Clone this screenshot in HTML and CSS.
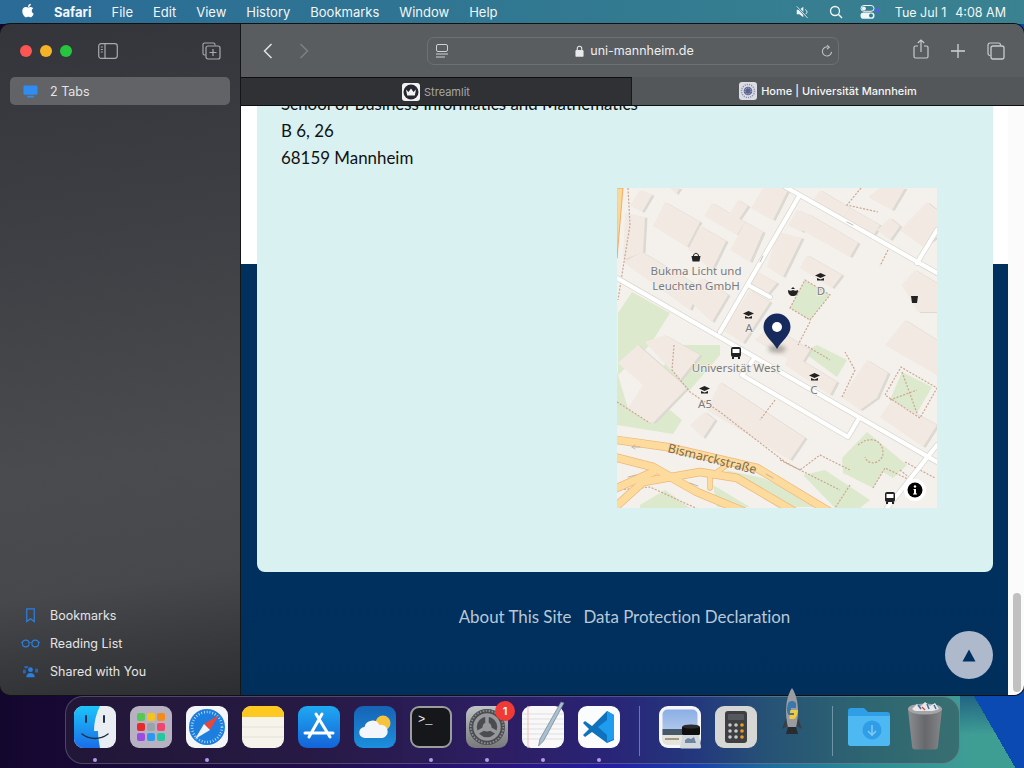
FILE: index.html
```html
<!DOCTYPE html>
<html lang="en">
<head>
    <meta charset="UTF-8">
    <meta name="viewport" content="width=device-width, initial-scale=1.0">
    <title>Home | Universität Mannheim</title>
    <link rel="stylesheet" href="styles.css">
</head>
<body>
<div class="desktop">
    <!-- menu bar -->
    <header class="menubar">
        <svg class="apple" viewBox="0 0 24 24"><path d="M17.05 20.28c-.98.95-2.05.8-3.08.35-1.09-.46-2.09-.48-3.24 0-1.44.62-2.2.44-3.06-.35C2.79 15.25 3.51 7.59 9.05 7.31c1.35.07 2.29.74 3.08.8 1.18-.24 2.31-.93 3.57-.84 1.51.12 2.65.72 3.4 1.8-3.12 1.87-2.38 5.98.48 7.13-.57 1.5-1.31 2.99-2.54 4.09zM12.03 7.25c-.15-2.23 1.66-4.07 3.74-4.25.29 2.58-2.34 4.5-3.74 4.25z"/></svg>
        <nav class="menus">
            <span class="menu-app">Safari</span>
            <span>File</span>
            <span>Edit</span>
            <span>View</span>
            <span>History</span>
            <span>Bookmarks</span>
            <span>Window</span>
            <span>Help</span>
        </nav>
        <div class="status">
            <svg class="status-mute" viewBox="0 0 16 16"><path d="M2 5.500h3L9.500 2v12L5 10.500H2z" fill="#eef3f5"/><path d="M12 5l2 3-2 3" fill="none" stroke="#eef3f5" stroke-width="1"/><path d="M2 1.500 14.500 15" stroke="#2f7a90" stroke-width="2.400"/><path d="M2 1.500 14.500 15" stroke="#eef3f5" stroke-width="1"/></svg>
            <svg class="status-search" viewBox="0 0 14 14"><circle cx="6" cy="6" r="4.500" fill="none" stroke="#f2f5f6" stroke-width="1.300"/><path d="M9.300 9.300 13 13" stroke="#f2f5f6" stroke-width="1.500"/></svg>
            <svg class="status-control" viewBox="0 0 20 14"><rect x="1" y="0.500" width="13" height="5.800" rx="2.900" fill="none" stroke="#f2f5f6"/><circle cx="3.900" cy="3.400" r="2" fill="#f2f5f6"/><rect x="0.500" y="7.500" width="14" height="6.300" rx="3.100" fill="#f2f5f6"/><circle cx="11" cy="10.600" r="2" fill="#2f7a90"/><circle cx="17.500" cy="5.500" r="2" fill="#5a5cf0"/></svg>
            <span class="status-time"><span>Tue Jul 1</span><span>4:08 AM</span></span>
        </div>
    </header>

    <!-- safari window -->
    <main class="window">
        <aside class="sidebar">
            <div class="side-top">
                <div class="lights">
                    <i class="light light-red"></i>
                    <i class="light light-yellow"></i>
                    <i class="light light-green"></i>
                </div>
                <svg class="side-toggle" viewBox="0 0 20 16"><rect x="0.700" y="0.700" width="18.600" height="14.600" rx="2.500" fill="none" stroke="#a9aaac" stroke-width="1.200"/><path d="M7 1v14" stroke="#a9aaac" stroke-width="1.200"/><path d="M2.800 4h2M2.800 6.500h2M2.800 9h2" stroke="#a9aaac"/></svg>
                <svg class="side-newgroup" viewBox="0 0 19 18"><path d="M3.500 13H2.500A1.500 1.500 0 0 1 1 11.500v-9A1.500 1.500 0 0 1 2.500 1h9A1.500 1.500 0 0 1 13 2.500V3.500" fill="none" stroke="#a9aaac" stroke-width="1.100"/><rect x="4" y="4" width="14" height="13" rx="2" fill="none" stroke="#a9aaac" stroke-width="1.200"/><path d="M11 7v7M7.500 10.500h7" stroke="#a9aaac" stroke-width="1.200"/></svg>
            </div>
            <div class="side-tabs">
                <svg class="side-icon" viewBox="0 0 16 14"><rect x="0.500" y="0.500" width="15" height="10" rx="1.500" fill="#2f8cf0"/><path d="M4.500 12.500h7" stroke="#2f8cf0" stroke-width="2"/></svg>
                <span>2 Tabs</span>
            </div>
            <ul class="side-list">
                <li>
                    <svg class="side-icon" viewBox="0 0 16 16"><path d="M4 1h8v13.500l-4-3-4 3z" fill="none" stroke="#2a7fe0" stroke-width="1.300"/></svg>
                    Bookmarks
                </li>
                <li>
                    <svg class="side-icon side-icon-wide" viewBox="0 0 20 10"><circle cx="5" cy="5" r="3.500" fill="none" stroke="#2a7fe0" stroke-width="1.200"/><circle cx="15" cy="5" r="3.500" fill="none" stroke="#2a7fe0" stroke-width="1.200"/><path d="M8.500 4.500c1-.8 2-.8 3 0M1.500 4.500 0 3.500M18.500 4.500l1.500-1" fill="none" stroke="#2a7fe0"/></svg>
                    Reading List
                </li>
                <li>
                    <svg class="side-icon" viewBox="0 0 16 14"><circle cx="8" cy="5" r="2.600" fill="#2a7fe0"/><path d="M3.500 13c0-3 2-4.500 4.500-4.500s4.500 1.500 4.500 4.500z" fill="#2a7fe0"/><path d="M0 5h3v4H0zM1.500 1h4v2.500h-4zM13 4h3v4h-3z" fill="#2368b8"/></svg>
                    Shared with You
                </li>
            </ul>
        </aside>

        <section class="browser">
            <div class="toolbar">
                <svg class="nav-back" viewBox="0 0 10 16"><path d="M8.500 1 1.500 8l7 7" fill="none" stroke="#e2e3e4" stroke-width="1.500"/></svg>
                <svg class="nav-forward" viewBox="0 0 10 16"><path d="M1.500 1l7 7-7 7" fill="none" stroke="#7d8083" stroke-width="1.500"/></svg>
                <div class="address">
                    <svg class="addr-reader" viewBox="0 0 12 14"><rect x="0.500" y="0.500" width="11" height="7" rx="1.500" fill="none" stroke="#d0d1d2"/><path d="M0 10h12M0 13h9" stroke="#d0d1d2"/></svg>
                    <span class="addr-url">
                        <svg class="addr-lock" viewBox="0 0 10 13"><path d="M2.500 6V3.700a2.500 2.500 0 0 1 5 0V6" fill="none" stroke="#e8e9ea" stroke-width="1.200"/><rect x="0.500" y="5.500" width="9" height="7.500" rx="1.300" fill="#e8e9ea"/></svg>
                        uni-mannheim.de
                    </span>
                    <svg class="addr-reload" viewBox="0 0 13 14"><path d="M8.500 2.800A5 5 0 1 0 11.500 8" fill="none" stroke="#c3c4c5" stroke-width="1.100"/><path d="M6.500 0.500 9 2.800 6.500 5" fill="none" stroke="#c3c4c5" stroke-width="1.100"/></svg>
                </div>
                <div class="tool-right">
                    <svg class="tool-share" viewBox="0 0 16 20"><path d="M5 7H2.500A1.500 1.500 0 0 0 1 8.500v9A1.500 1.500 0 0 0 2.500 19h11a1.500 1.500 0 0 0 1.500-1.500v-9A1.500 1.500 0 0 0 13.500 7H11" fill="none" stroke="#c9cacb" stroke-width="1.200"/><path d="M8 13V1M4.800 4 8 1l3.200 3" fill="none" stroke="#c9cacb" stroke-width="1.200"/></svg>
                    <svg class="tool-plus" viewBox="0 0 14 14"><path d="M7 0v14M0 7h14" stroke="#d0d1d2" stroke-width="1.300"/></svg>
                    <svg class="tool-tabs" viewBox="0 0 18 18"><path d="M3.500 13.500H3A2 2 0 0 1 1 11.500V3a2 2 0 0 1 2-2h8.500a2 2 0 0 1 2 2v.500" fill="none" stroke="#c9cacb" stroke-width="1.200"/><rect x="4" y="4" width="13" height="13" rx="2" fill="none" stroke="#c9cacb" stroke-width="1.300"/></svg>
                </div>
            </div>
            <div class="tabbar">
                <div class="tab tab-off">
                    <svg class="favicon" viewBox="0 0 18 18"><rect width="18" height="18" rx="3" fill="#f2f2f2"/><circle cx="9" cy="9" r="7.500" fill="#262730"/><path d="M4 6.500 6.500 9 9 5.500 11.500 9 14 6.500 12.800 12.500H5.200z" fill="#f2f2f2"/></svg>
                    <span>Streamlit</span>
                </div>
                <div class="tab tab-on">
                    <svg class="favicon" viewBox="0 0 18 18"><rect width="18" height="18" rx="3" fill="#dcdde2"/><circle cx="9" cy="9" r="6.500" fill="none" stroke="#8d93b4" stroke-width="1.500" stroke-dasharray="1.200 1"/><circle cx="9" cy="9" r="4.300" fill="#59638f"/><circle cx="9" cy="9" r="3" fill="none" stroke="#c5c8da" stroke-dasharray="1 1"/></svg>
                    <span>Home | Universität Mannheim</span>
                </div>
            </div>

            <div class="viewport">
                <div class="page">
                    <div class="card">
                        <p class="address-text">School of Business Informatics and Mathematics</p>
                        <p class="address-text">B 6, 26</p>
                        <p class="address-text">68159 Mannheim</p>
                        <svg class="map" viewBox="617 188 320 320">
                            <defs>
                                <g id="bld">
                                    <polygon points="665,202 700,222 687,247 653,226"/>
                                    <polygon points="700,226 726,241 712,270 688,250"/>
                                    <polygon points="712,203 745,222 737,235 704,216"/>
                                    <polygon points="738,200 748,206 737,222 728,216"/>
                                    <polygon points="763,188 789,188 773,220 751,208"/>
                                    <polygon points="745,222 763,232 750,262 730,250"/>
                                    <polygon points="670,188 680,188 676,194"/>
                                    <polygon points="640,190 652,195 642,212 630,205"/>
                                    <polygon points="625,213 645,217 643,252 623,260"/>
                                    <polygon points="623,262 642,252 700,287 690,310"/>
                                    <polygon points="684,296 702,278 728,295 712,322"/>
                                    <polygon points="810,215 858,243 850,257 802,230"/>
                                    <polygon points="797,210 810,215 802,232 788,225"/>
                                    <polygon points="778,232 802,238 783,277 767,267"/>
                                    <polygon points="757,272 777,283 767,295 750,283"/>
                                    <polygon points="807,255 842,275 832,288 800,268"/>
                                    <polygon points="723,330 750,290 770,302 743,343"/>
                                    <polygon points="755,340 770,325 810,350 800,366"/>
                                    <polygon points="820,190 850,208 843,218 813,200"/>
                                    <polygon points="850,208 880,225 873,236 843,218"/>
                                    <polygon points="880,188 905,188 892,210 868,197"/>
                                    <polygon points="900,230 927,202 937,210 937,237 923,247"/>
                                    <polygon points="877,230 890,218 900,226 890,240"/>
                                    <polygon points="902,285 915,270 937,283 937,312 918,312"/>
                                    <polygon points="618,363 638,345 687,388 653,423 628,408 643,385"/>
                                    <polygon points="645,342 665,335 700,355 680,380"/>
                                    <polygon points="720,382 805,438 790,460 707,410"/>
                                    <polygon points="690,425 705,412 715,420 703,438"/>
                                    <polygon points="790,353 837,382 830,395 785,365"/>
                                    <polygon points="842,397 867,360 888,373 877,398 860,410"/>
                                    <polygon points="880,417 892,400 937,425 923,447"/>
                                    <polygon points="885,345 905,320 937,340 937,375"/>
                                </g>
                            </defs>
                            <rect x="617" y="188" width="320" height="320" fill="#f4f1ec"/>

                            <!-- green areas -->
                            <g fill="#dde9cd">
                                <polygon points="618,313 632,292 670,313 650,345 618,375"/>
                                <polygon points="660,372 677,345 720,345 720,355 690,390"/>
                                <polygon points="790,308 805,280 830,295 810,320"/>
                                <polygon points="803,352 817,345 847,360 837,377"/>
                                <polygon points="890,400 902,372 932,387 917,413"/>
                                <polygon points="842,458 867,432 907,465 893,478 883,472 873,488 843,473"/>
                                <polygon points="803,475 825,470 870,500 860,508 835,508"/>
                                <polygon points="725,470 763,478 823,507 777,507"/>
                                <polygon points="713,485 750,507 717,507"/>
                                <polygon points="617,372 628,408 650,423 670,410 682,420 673,434 617,425"/>
                                <polygon points="640,505 665,490 690,508 640,508"/>
                            </g>

                            <use href="#bld" transform="translate(2.500 1)" fill="#dcd9d3"/>
                            <use href="#bld" fill="#f1e9e2"/>

                            <!-- footpaths -->
                            <g fill="none" stroke="#cba691" stroke-width="1.200" stroke-dasharray="2 1.500">
                                <path d="M628 188 630 225 624 262 618 300"/>
                                <path d="M790 308 805 280 830 295 810 320z"/>
                                <path d="M861 188 847 205 878 212M888 250 880 266"/>
                                <path d="M805 345 830 360M810 322 798 345"/>
                                <path d="M885 395 901 367 937 388 920 418z"/>
                                <path d="M674 345 672 370 690 392 720 412 785 462 800 470 820 455 850 470"/>
                                <path d="M780 460 800 470 840 490M850 485 835 508"/>
                                <path d="M842 397 855 370 845 352"/>
                                <path d="M858 445c12-10 25-5 25 8 0 10-15 14-18 4"/>
                                <path d="M617 490 650 487 700 510"/>
                                <path d="M617 402 650 423"/>
                                <path d="M775 400 760 420 M873 488 885 468 910 480"/>
                                <path d="M900 470 925 490M905 462 935 478"/>
                                <path d="M890 400 917 390M902 372 917 413"/>
                            </g>

                            <!-- streets -->
                            <g fill="none" stroke-linecap="round" stroke-linejoin="round">
                                <g stroke="#d8d5cf" stroke-width="5.500">
                                    <path d="M617 278 937 462M775 181 937 273M798 198 720 332M748 285 770 297"/>
                                    <path d="M753 360 742 375 848 437 858 420M917 263 937 230M937 445 887 508"/>
                                </g>
                                <g stroke="#fff" stroke-width="4.200">
                                    <path d="M617 278 937 462M775 181 937 273M798 198 720 332M748 285 770 297"/>
                                    <path d="M753 360 742 375 848 437 858 420M917 263 937 230M937 445 887 508"/>
                                </g>
                                <path d="M617 188h6l-6 70z" fill="#fcd896" stroke="#ee9f58" stroke-width="0.800"/>
                                <g stroke="#efb679" stroke-width="8.600">
                                    <path d="M610 439 667 447 757 468 830 512"/>
                                    <path d="M610 456 653 467 697 492 745 512"/>
                                    <path d="M610 512 643 482 700 472 737 478 795 512"/>
                                    <path d="M610 491 653 472"/>
                                    <path d="M710 488 710 477 727 465" stroke-width="5.500"/>
                                </g>
                                <g stroke="#fddb9d" stroke-width="7.200">
                                    <path d="M610 439 667 447 757 468 830 512"/>
                                    <path d="M610 456 653 467 697 492 745 512"/>
                                    <path d="M610 512 643 482 700 472 737 478 795 512"/>
                                    <path d="M610 491 653 472"/>
                                    <path d="M710 488 710 477 727 465" stroke-width="4"/>
                                </g>
                                <g stroke="#b3aaa0" stroke-width="0.800">
                                    <path d="M853 225l-6-3M640 447h-6M632 447l3-2M632 447l3 2"/>
                                    <path d="M773 478l-7-4M690 483l8 3M628 477l8-2"/>
                                    <path d="M760 262l3-6"/>
                                </g>
                            </g>

                            <!-- labels -->
                            <g class="map-label">
                                <text x="696" y="275">Bukma Licht und</text>
                                <text x="696" y="290">Leuchten GmbH</text>
                                <text x="736" y="372">Universität West</text>
                                <text x="705" y="408">A5</text>
                                <text x="749" y="332">A</text>
                                <text x="821" y="295">D</text>
                                <text x="814" y="394">C</text>
                            </g>
                            <text class="map-street" transform="translate(667 452) rotate(14)">Bismarckstraße</text>

                            <!-- pois -->
                            <g fill="#222">
                                <path d="M691.500 256h9l-1 5.500h-7z"/>
                                <path d="M693.500 256c0-3.500 5-3.500 5 0" fill="none" stroke="#222"/>
                                <path d="M815 275.500l5.500-2.500 5.500 2.500-5.500 2.500zM817 278l3.500 1.500 3.500-1.500v2.500h-7z"/>
                                <path d="M743 313.500l5.500-2.500 5.500 2.500-5.500 2.500zM745 316l3.500 1.500 3.500-1.500v2.500h-7z"/>
                                <path d="M809 375.500l5.500-2.500 5.500 2.500-5.500 2.500zM811 378l3.500 1.500 3.500-1.500v2.500h-7z"/>
                                <path d="M699 388.500l5.500-2.500 5.500 2.500-5.500 2.500zM701 391l3.500 1.500 3.500-1.500v2.500h-7z"/>
                                <path d="M788 290c2 1 3 1 5 0 2 1 3 1 5 0 0 4-2 6-5 6s-5-2-5-6zM793 287l2 2h-4z"/>
                                <path d="M911 296h7l-1 7h-5z"/>
                            </g>
                            <g>
                                <rect x="731" y="347" width="10" height="10" rx="2" fill="#222"/>
                                <rect x="732.500" y="349" width="7" height="4" fill="#fff"/>
                                <path d="M732 357h2v2h-2zM738 357h2v2h-2z" fill="#222"/>
                                <rect x="885" y="492" width="10" height="10" rx="2" fill="#222"/>
                                <rect x="886.500" y="494" width="7" height="4" fill="#fff"/>
                                <path d="M886 502h2v2h-2zM892 502h2v2h-2z" fill="#222"/>
                            </g>

                            <!-- marker -->
                            <ellipse class="map-shadow" cx="777" cy="349" rx="9" ry="4"/>
                            <path d="M777 349c-4-8-13.500-13-13.500-22a13.500 13.500 0 0 1 27 0c0 9-9.500 14-13.500 22z" fill="#172a5e"/>
                            <circle cx="777" cy="327" r="5" fill="#fff"/>

                            <!-- info button -->
                            <circle cx="915" cy="490" r="11" fill="#fff"/>
                            <circle cx="915" cy="490" r="7.500" fill="#000"/>
                            <circle cx="915" cy="486.500" r="1.200" fill="#fff"/>
                            <path d="M913.500 489h2.500v4.500h1v1h-4v-1h1v-3.500h-.5z" fill="#fff"/>
                        </svg>
                    </div>
                    <footer class="page-footer">
                        <a>About This Site</a>
                        <a>Data Protection Declaration</a>
                    </footer>
                    <div class="to-top"><svg viewBox="0 0 14 13"><path d="M7 0.500 13.500 12.500H0.500z" fill="#00305e"/></svg></div>
                </div>
                <div class="scrollbar"><div class="scroll-thumb"></div></div>
            </div>
        </section>
    </main>

    <!-- dock -->
    <div class="dock">
        <div class="dock-app">
            <svg viewBox="0 0 42 42"><defs><linearGradient id="fnd" x1="0" y1="0" x2="0" y2="1"><stop offset="0" stop-color="#1cc4fa"/><stop offset="1" stop-color="#1a6ee8"/></linearGradient></defs><rect width="42" height="42" rx="9" fill="#e9eef3"/><path d="M9 0h17c-4 8-6 16-6 25h4c0 6 1 11 2 17H9a9 9 0 0 1-9-9V9a9 9 0 0 1 9-9z" fill="url(#fnd)"/><path d="M12 10v6M30 10v6" stroke="#1f2f45" stroke-width="2" stroke-linecap="round"/><path d="M8 28c8 6 18 6 26 0" fill="none" stroke="#1f2f45" stroke-width="1.500" stroke-linecap="round"/></svg>
            <i class="dock-dot"></i>
        </div>
        <div class="dock-app">
            <svg viewBox="0 0 42 42"><rect width="42" height="42" rx="9" fill="#b8b1c2"/><rect x="7" y="7" width="8" height="8" rx="2" fill="#54c957"/><rect x="17" y="7" width="8" height="8" rx="2" fill="#f5c21e"/><rect x="27" y="7" width="8" height="8" rx="2" fill="#f28c1e"/><rect x="7" y="17" width="8" height="8" rx="2" fill="#e8292c"/><rect x="17" y="17" width="8" height="8" rx="2" fill="#9aa3a8"/><rect x="27" y="17" width="8" height="8" rx="2" fill="#f0456e"/><rect x="7" y="27" width="8" height="8" rx="2" fill="#9a4de0"/><rect x="17" y="27" width="8" height="8" rx="2" fill="#2a9af0"/><rect x="27" y="27" width="8" height="8" rx="2" fill="#20c9a0"/></svg>
        </div>
        <div class="dock-app">
            <svg viewBox="0 0 42 42"><rect width="42" height="42" rx="9" fill="#f4f5f6"/><circle cx="21" cy="21" r="18" fill="#1c7fe0"/><circle cx="21" cy="21" r="15" fill="none" stroke="#cfe6fb" stroke-width="2.500" stroke-dasharray="0.800 2"/><polygon points="33,9 18,18 24,24" fill="#e8453c"/><polygon points="9,33 18,18 24,24" fill="#f1f2f3"/></svg>
            <i class="dock-dot"></i>
        </div>
        <div class="dock-app">
            <svg viewBox="0 0 42 42"><rect width="42" height="42" rx="9" fill="#f5f3ea"/><path d="M0 9a9 9 0 0 1 9-9h24a9 9 0 0 1 9 9v2H0z" fill="#fdc921"/><path d="M0 21h42M0 31h42" stroke="#e4e2d8"/></svg>
        </div>
        <div class="dock-app">
            <svg viewBox="0 0 42 42"><defs><linearGradient id="aps" x1="0" y1="0" x2="0" y2="1"><stop offset="0" stop-color="#1ea9f2"/><stop offset="1" stop-color="#1463d8"/></linearGradient></defs><rect width="42" height="42" rx="9" fill="url(#aps)"/><path d="M24 8 11 31M18 8l14 23M7 27h28" stroke="#fff" stroke-width="3" stroke-linecap="round"/></svg>
        </div>
        <div class="dock-app">
            <svg viewBox="0 0 42 42"><defs><linearGradient id="wth" x1="0" y1="0" x2="0" y2="1"><stop offset="0" stop-color="#1663b5"/><stop offset="1" stop-color="#1c8fdc"/></linearGradient></defs><rect width="42" height="42" rx="9" fill="url(#wth)"/><circle cx="29" cy="17" r="7.500" fill="#f6c33c"/><path d="M11 32a5.500 5.500 0 0 1-.5-11 8 8 0 0 1 15-2 6.500 6.500 0 0 1 3 13z" fill="#f3f7fb"/></svg>
        </div>
        <div class="dock-app">
            <div class="term-icon"><span>&gt;_</span></div>
            <i class="dock-dot"></i>
        </div>
        <div class="dock-app">
            <svg viewBox="0 0 42 42"><defs><linearGradient id="stg" x1="0" y1="0" x2="0" y2="1"><stop offset="0" stop-color="#c0c4c6"/><stop offset="1" stop-color="#77797b"/></linearGradient></defs><rect width="42" height="42" rx="9" fill="url(#stg)"/><circle cx="21" cy="21" r="18" fill="#4a4c4f"/><circle cx="21" cy="21" r="16.300" fill="none" stroke="#8c8e91" stroke-width="1.800" stroke-dasharray="1.500 1.500"/><circle cx="21" cy="21" r="12" fill="none" stroke="#96989b" stroke-width="3.500"/><circle cx="21" cy="21" r="4.500" fill="#96989b"/><path d="M21 21V9M21 21 10.500 27M21 21l10.500 6" stroke="#96989b" stroke-width="3.500"/></svg>
            <span class="dock-badge">1</span>
            <i class="dock-dot"></i>
        </div>
        <div class="dock-app">
            <svg viewBox="0 0 42 42"><rect y="0" width="42" height="42" rx="9" fill="#f8f8f8"/><path d="M0 8h42M0 13h42M0 18h42M0 23h42M0 28h42M0 33h42" stroke="#dfdfe2" stroke-width="1"/><path d="M6 0v42" stroke="#f3b9b9"/><path d="M39-4 18 33l-1.500 7 5-5L42-3z" fill="#a9c0d2" stroke="#6e7f8c" stroke-width="0.700"/></svg>
            <i class="dock-dot"></i>
        </div>
        <div class="dock-app">
            <svg viewBox="0 0 42 42"><rect width="42" height="42" rx="9" fill="#fbfcfd"/><path d="M29 5 14 20 7 15 5 17l6 6-6 6 2 2 7-5 15 11 7-3V9z" fill="#0e72bd"/><path d="M29 5l7 4v24l-7 3zM29 14 20 21l9 8z" fill="#1f9cf0" fill-rule="evenodd"/></svg>
            <i class="dock-dot"></i>
        </div>
        <i class="dock-sep"></i>
        <div class="dock-app">
            <svg viewBox="0 0 42 42"><defs><linearGradient id="sky" x1="0" y1="0" x2="0" y2="1"><stop offset="0" stop-color="#8aaee6"/><stop offset="1" stop-color="#c9d8ec"/></linearGradient></defs><rect width="42" height="42" rx="9" fill="#f4f6f8"/><rect x="3.500" y="3.500" width="35" height="35" rx="5" fill="url(#sky)"/><path d="M3.500 23h20v6H3.500z" fill="#46586a"/><path d="M3.500 29h20v9.500H8a4.500 4.500 0 0 1-4.500-4.500z" fill="#e6e4da"/><path d="M6 33h14" stroke="#8a7f6c" stroke-width="1.500"/><path d="M24 28h16l2 13a1.500 1.500 0 0 1-1.500 1.500H22.500A1.500 1.500 0 0 1 21 41z" fill="#d3d8dd"/><rect x="23" y="20" width="18" height="9" rx="1.500" fill="#0f0f10"/><ellipse cx="32" cy="20.500" rx="8.500" ry="2" fill="#2c2c2e"/><path d="M26 34l3-2 3 1 3-2 2 6H26z" fill="#6f86a0"/></svg>
        </div>
        <div class="dock-app">
            <svg viewBox="0 0 42 42"><rect width="42" height="42" rx="9" fill="#d6d6d4"/><rect x="10" y="5" width="22" height="32" rx="3" fill="#3d3f43"/><rect x="13" y="8" width="16" height="6" rx="1" fill="#55585c"/><g fill="#c9c9c9"><circle cx="15" cy="19" r="1.800"/><circle cx="21" cy="19" r="1.800"/><circle cx="15" cy="25" r="1.800"/><circle cx="21" cy="25" r="1.800"/><circle cx="15" cy="31" r="1.800"/><circle cx="21" cy="31" r="1.800"/></g><g fill="#f39a1c"><circle cx="27" cy="19" r="1.800"/><circle cx="27" cy="25" r="1.800"/><circle cx="27" cy="31" r="1.800"/></g></svg>
        </div>
        <div class="dock-app">
            <svg class="rocket" viewBox="0 0 20 50"><path d="M10 0c4 6 6 14 6 24 0 6-1 11-2 15H6c-1-4-2-9-2-15C4 14 6 6 10 0z" fill="#9a9c9f"/><path d="M4 30 0 41l5-3zM16 30l4 11-5-3z" fill="#3c3d40"/><path d="M6 39h8l2 7H4z" fill="#2a2b2e"/><path d="M6 16c0-2 2-3 4-3s4 1 4 3v4H9v2h5l-2 5H8c-2 0-3-2-3-5s1-6 1-6z" fill="#3a77ad"/><path d="M9 22h7c0 3-2 9-4 9H8c-1 0-1-2 0-4h4v-2H8c0-1 0-3 1-3z" fill="#f5c93c"/></svg>
        </div>
        <i class="dock-sep dock-sep-last"></i>
        <div class="dock-app">
            <svg viewBox="0 0 42 42"><path d="M0 5a3 3 0 0 1 3-3h13l4 4h19a3 3 0 0 1 3 3v28a3 3 0 0 1-3 3H3a3 3 0 0 1-3-3z" fill="#2f9ee6"/><path d="M0 10h42v27a3 3 0 0 1-3 3H3a3 3 0 0 1-3-3z" fill="#4db8f2"/><circle cx="24" cy="24" r="9.500" fill="#2f9ee6"/><path d="M24 19v9M20 25l4 4 4-4" fill="none" stroke="#7cc9f3" stroke-width="1.600"/></svg>
        </div>
        <div class="dock-app">
            <svg class="trash" viewBox="0 0 36 48"><defs><linearGradient id="trs" x1="0" y1="0" x2="1" y2="0"><stop offset="0" stop-color="#8b8d90"/><stop offset="0.500" stop-color="#66686b"/><stop offset="1" stop-color="#848689"/></linearGradient></defs><path d="M1 7h34l-4 37a3.500 3.500 0 0 1-3.500 3.500h-19A3.500 3.500 0 0 1 5 44z" fill="url(#trs)"/><ellipse cx="18" cy="7" rx="17" ry="5.500" fill="#a3a5a7"/><path d="M5 7l5-5 3 3 5-5 5 4 5-3 4 6-6 2H8z" fill="#e8e8e8"/><path d="M11 3l3 4M20 2l2 5M27 3l2 4" stroke="#3a6ea8" stroke-width="1.500"/><path d="M15 5l3 3" stroke="#d0453c" stroke-width="1.200"/></svg>
        </div>
    </div>
</div>
</body>
</html>
```

FILE: styles.css
```css
/* General reset */
* {
    margin: 0;
    padding: 0;
    box-sizing: border-box;
}

body {
    font-family: 'Inter', 'Liberation Sans', sans-serif;
    overflow: hidden;
}

/* Desktop wallpaper */
.desktop {
    position: relative;
    width: 1024px;
    height: 768px;
    overflow: hidden;
    background:
        linear-gradient(60deg, transparent 69.2%, #0b4ab2 69.2%),
        linear-gradient(180deg, rgba(14, 60, 120, 0.6) 695px, transparent 735px) right top / 64px 100% no-repeat,
        linear-gradient(90deg, #14072e 0%, #200d4a 30%, #2a1580 50%, #2420a0 60%, #1a40a8 68%, #1f6c9c 75%, #2c8c94 85%, #3f9e94 95%);
}

/* Menu bar */
.menubar {
    display: flex;
    align-items: center;
    height: 24px;
    padding: 0 18px 0 19px;
    background: linear-gradient(90deg, #2a6b97 0%, #327a90 60%, #3a8290 100%);
    color: #f3f6f7;
    font-size: 13px;
}

.apple {
    width: 18px;
    height: 19px;
    margin-top: -3px;
    fill: #fff;
}

.menus {
    display: flex;
    gap: 20px;
    margin-left: 17px;
}

.menu-app {
    font-weight: 700;
}

.status {
    display: flex;
    align-items: center;
    margin-left: auto;
    font-size: 12.5px;
}

.status-mute {
    width: 14px;
    height: 14px;
}

.status-search {
    width: 14px;
    height: 14px;
    margin-left: 20px;
}

.status-control {
    width: 20px;
    height: 14px;
    margin-left: 17px;
}

.status-time {
    display: flex;
    gap: 9px;
    margin-left: 15px;
}

/* Window */
.window {
    position: absolute;
    top: 24px;
    left: 0;
    width: 1024px;
    height: 671px;
    display: flex;
    overflow: hidden;
    border-radius: 10px;
    box-shadow: 0 0 0 1px #111;
}

.sidebar {
    width: 241px;
    display: flex;
    flex-direction: column;
    border-right: 1px solid #151618;
    background: linear-gradient(172deg, #34353a 0%, #3c3d42 25%, #4a4b4e 65%, #47484b 82%, #2c2d30 100%);
    color: #e4e5e6;
    font-size: 12.5px;
}

.side-top {
    display: flex;
    align-items: center;
    height: 53px;
    padding: 0 20px;
}

.lights {
    display: flex;
    gap: 8px;
}

.light {
    width: 12px;
    height: 12px;
    border-radius: 50%;
}

.light-red { background: #fc5652; }
.light-yellow { background: #f5b428; }
.light-green { background: #27c63f; }

.side-toggle {
    width: 20px;
    height: 16px;
    margin-left: 26px;
}

.side-newgroup {
    width: 19px;
    height: 18px;
    margin-left: auto;
    margin-right: -1px;
}

.side-tabs {
    display: flex;
    align-items: center;
    height: 28px;
    margin: 0 10px;
    padding-left: 13px;
    gap: 12px;
    background: #626366;
    border-radius: 5px;
}

.side-icon {
    width: 15px;
    height: 15px;
    flex: none;
}

.side-icon-wide {
    width: 19px;
    margin: 0 -2px;
}

.side-list {
    list-style: none;
    margin-top: auto;
    padding: 0 0 10px 23px;
}

.side-list li {
    display: flex;
    align-items: center;
    gap: 12px;
    height: 28px;
}

/* Browser area */
.browser {
    flex: 1;
    display: flex;
    flex-direction: column;
    min-width: 0;
}

.toolbar {
    display: flex;
    align-items: center;
    height: 53px;
    flex: none;
    padding: 0 19px 0 22px;
    background: #5a5d60;
}

.nav-back {
    width: 10px;
    height: 16px;
}

.nav-forward {
    width: 10px;
    height: 16px;
    margin-left: 26px;
}

.address {
    display: flex;
    align-items: center;
    justify-content: space-between;
    width: 412px;
    height: 28px;
    margin-left: 118px;
    padding: 0 5px 0 8px;
    border: 1px solid #6e7174;
    border-radius: 7px;
    color: #eceded;
    font-size: 12.5px;
}

.addr-reader {
    width: 12px;
    height: 14px;
}

.addr-url {
    display: flex;
    align-items: center;
    gap: 6px;
}

.addr-lock {
    width: 9px;
    height: 12px;
}

.addr-reload {
    width: 12px;
    height: 14px;
}

.tool-right {
    display: flex;
    align-items: center;
    gap: 22px;
    margin-left: auto;
}

.tool-share {
    width: 16px;
    height: 20px;
    margin-top: -3px;
}

.tool-plus {
    width: 14px;
    height: 14px;
}

.tool-tabs {
    width: 18px;
    height: 18px;
}

.tabbar {
    display: flex;
    height: 29px;
    flex: none;
    border-bottom: 1px solid #0d0e10;
    font-size: 11px;
}

.tab {
    flex: 1;
    display: flex;
    align-items: center;
    justify-content: center;
    gap: 4px;
}

.tab-off {
    flex: none;
    width: 391px;
    background: #2f3134;
    border-top: 1px solid #0d0e10;
    border-right: 1px solid #17181a;
    color: #a6a8aa;
}

.tab-on {
    background: #54575a;
    color: #f4f5f5;
    font-weight: 500;
}

.favicon {
    width: 18px;
    height: 18px;
}

/* Page content */
.viewport {
    flex: 1;
    display: flex;
    min-height: 0;
}

.page {
    position: relative;
    flex: 1;
    overflow: hidden;
    background: linear-gradient(#fff 158px, #00305e 158px, #00305e 480px, #012f5c 100%);
}

.card {
    margin: -20px 15px 0 16px;
    padding: 4px 24px 64px;
    background: #d9f1f1;
    border-radius: 8px;
}

.address-text {
    font-family: 'Lato', 'Open Sans', sans-serif;
    font-size: 16.9px;
    font-variant-ligatures: none;
    line-height: 27px;
    color: #111;
}

.map {
    display: block;
    width: 320px;
    height: 320px;
    margin: 17px 0 0 336px;
}

.map-label text {
    font-family: 'Noto Sans', sans-serif;
    font-size: 11.500px;
    fill: #7b7b7d;
    text-anchor: middle;
    paint-order: stroke;
    stroke: #f4f2ee;
    stroke-width: 1.500px;
}

.map-street {
    font-family: 'Noto Sans', sans-serif;
    font-size: 12.500px;
    fill: #7d6c4e;
    text-anchor: start;
}

.map-shadow {
    fill: #7d7a78;
    opacity: 0.55;
    filter: blur(2px);
}

.page-footer {
    display: flex;
    justify-content: center;
    gap: 12px;
    padding-top: 32px;
    font-family: 'Lato', 'Open Sans', sans-serif;
    font-size: 16.9px;
    font-variant-ligatures: none;
    line-height: 25px;
    color: #bac7d6;
}

.to-top {
    position: absolute;
    left: 704px;
    top: 525px;
    width: 48px;
    height: 48px;
    display: flex;
    align-items: center;
    justify-content: center;
    border-radius: 50%;
    background: #aeb9cc;
}

.to-top svg {
    width: 14px;
    height: 13px;
}

.scrollbar {
    width: 16px;
    flex: none;
    padding: 33px 3px 3px 5px;
    background: #fbfbfb;
    display: flex;
    flex-direction: column;
    justify-content: flex-end;
}

.scroll-thumb {
    height: 99px;
    background: #c1c1c1;
    border-radius: 4px;
}

/* Dock */
.dock {
    position: absolute;
    left: 65px;
    top: 696px;
    width: 895px;
    height: 68px;
    display: flex;
    align-items: flex-start;
    gap: 14px;
    padding: 9px 8px 0;
    background: rgba(50, 45, 60, 0.4);
    border: 1px solid rgba(190, 195, 215, 0.28);
    border-radius: 18px;
}

.dock-app {
    position: relative;
    width: 42px;
    height: 42px;
    flex: none;
}

.dock-app > svg {
    display: block;
    width: 42px;
    height: 42px;
    overflow: visible;
}

.dock-app > .rocket {
    width: 20px;
    height: 50px;
    margin: -18px 0 0 11px;
}

.dock-app > .trash {
    width: 36px;
    height: 48px;
    margin: -4px 0 0 3px;
}

.dock-dot {
    position: absolute;
    left: 19px;
    top: 52px;
    width: 4px;
    height: 4px;
    border-radius: 50%;
    background: #b49af0;
}

.dock-badge {
    position: absolute;
    top: -5px;
    right: -7px;
    width: 20px;
    height: 20px;
    border-radius: 50%;
    background: #f03a36;
    color: #fff;
    font-size: 11px;
    font-weight: 600;
    line-height: 20px;
    text-align: center;
}

.dock-sep {
    width: 1px;
    height: 50px;
    margin: 0 5px;
    flex: none;
    background: rgba(200, 210, 230, 0.45);
}

.dock-sep-last {
    margin-right: 1px;
}

.term-icon {
    width: 42px;
    height: 42px;
    padding: 5px 0 0 6px;
    background: #16171a;
    border: 2px solid #9b9d9f;
    border-radius: 9px;
    color: #f2f2f2;
    font-family: 'Liberation Mono', monospace;
    font-size: 12px;
    line-height: 14px;
}
```
